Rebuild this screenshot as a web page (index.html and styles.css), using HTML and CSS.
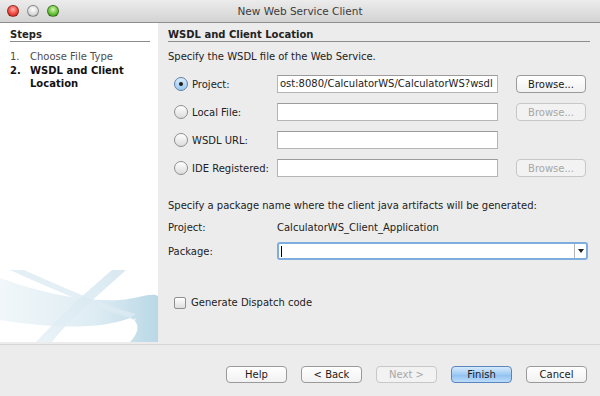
FILE: index.html
```html
<!DOCTYPE html>
<html lang="en">
<head>
    <meta charset="UTF-8">
    <title>New Web Service Client</title>
    <link rel="stylesheet" href="styles.css">
</head>
<body>
<div class="window">
    <!-- Barra de titulo -->
    <div class="titlebar">
        <div class="lights">
            <span class="light red"></span>
            <span class="light off"></span>
            <span class="light green"></span>
        </div>
        <div class="title">New Web Service Client</div>
    </div>

    <div class="main">
        <!-- Passos -->
        <div class="steps">
            <div class="section-head">Steps</div>
            <ol class="step-list">
                <li><span class="num">1.</span><span>Choose File Type</span></li>
                <li class="current"><span class="num">2.</span><span>WSDL and Client<br>Location</span></li>
            </ol>
            <svg class="swoosh" width="158" height="72" viewBox="0 0 158 72">
                <defs>
                    <linearGradient id="bandGrad" x1="0" y1="0" x2="1" y2="0">
                        <stop offset="0" stop-color="#f1f7fa"/>
                        <stop offset="0.6" stop-color="#deecf3"/>
                        <stop offset="1" stop-color="#b9d8e6"/>
                    </linearGradient>
                    <linearGradient id="stripeGrad" x1="0" y1="1" x2="1" y2="0">
                        <stop offset="0" stop-color="#e5f0f6"/>
                        <stop offset="1" stop-color="#d3e5ef"/>
                    </linearGradient>
                </defs>
                <path d="M0 8 C40 22 80 32 120 30 C140 28 152 22 158 26 L158 72 L130 72 C140 62 140 52 130 48 C100 60 50 58 0 50 Z" fill="url(#bandGrad)"/>
                <path d="M10 0 L24 0 C60 16 100 34 136 44 L130 48 C96 38 54 20 10 0 Z" fill="#ddebf3" opacity="0.8"/>
                <path d="M112 0 L126 0 C100 24 70 48 52 72 L36 72 C58 48 86 22 112 0 Z" fill="url(#stripeGrad)" opacity="0.85"/>
                <path d="M68 72 C90 66 118 58 136 48 L134 54 C114 64 92 70 80 72 Z" fill="#ffffff" opacity="0.7"/>
            </svg>
        </div>

        <!-- Painel principal -->
        <div class="panel">
            <div class="section-head">WSDL and Client Location</div>
            <p class="hint">Specify the WSDL file of the Web Service.</p>

            <div class="source-grid">
                <label class="radio-label"><span class="radio checked"></span>Project:</label>
                <div class="field">ost:8080/CalculatorWS/CalculatorWS?wsdl</div>
                <button class="btn">Browse...</button>

                <label class="radio-label"><span class="radio"></span>Local File:</label>
                <div class="field"></div>
                <button class="btn" disabled>Browse...</button>

                <label class="radio-label"><span class="radio"></span>WSDL URL:</label>
                <div class="field"></div>
                <span></span>

                <label class="radio-label"><span class="radio"></span>IDE Registered:</label>
                <div class="field"></div>
                <button class="btn" disabled>Browse...</button>
            </div>

            <p class="hint package-hint">Specify a package name where the client java artifacts will be generated:</p>

            <div class="package-grid">
                <span>Project:</span>
                <span>CalculatorWS_Client_Application</span>
                <span>Package:</span>
                <div class="combo">
                    <span class="caret"></span>
                    <span class="combo-arrow"></span>
                </div>
            </div>

            <label class="check-label"><span class="checkbox"></span>Generate Dispatch code</label>
        </div>
    </div>

    <!-- Botoes -->
    <div class="footer">
        <button class="btn wide">Help</button>
        <button class="btn wide">&lt; Back</button>
        <button class="btn wide" disabled>Next &gt;</button>
        <button class="btn wide default">Finish</button>
        <button class="btn wide">Cancel</button>
    </div>
</div>
</body>
</html>
```

FILE: styles.css
```css
* {
    box-sizing: border-box;
}
body {
    margin: 0;
    font-family: "DejaVu Sans", "Lucida Grande", sans-serif;
    font-size: 10px;
    line-height: 13px;
    color: #222;
}
.window {
    width: 600px;
    height: 396px;
    background: #ececec;
    display: flex;
    flex-direction: column;
    overflow: hidden;
}
.titlebar {
    height: 23px;
    flex: none;
    display: flex;
    align-items: center;
    position: relative;
    background: linear-gradient(#ececec, #d3d3d3);
    border-bottom: 1px solid #8e8e8e;
}
.lights {
    display: flex;
    gap: 8px;
    padding-left: 7px;
}
.light {
    width: 12px;
    height: 12px;
    border-radius: 50%;
    border: 1px solid rgba(0, 0, 0, 0.35);
}
.light.red {
    background: radial-gradient(circle at 50% 35%, #ffb3ae 0, #f0473d 55%, #b8231b 100%);
}
.light.off {
    background: radial-gradient(circle at 50% 35%, #ffffff 0, #dcdcdc 55%, #a9a9a9 100%);
}
.light.green {
    background: radial-gradient(circle at 50% 35%, #d6f5b2 0, #6ac33a 55%, #3a8a1a 100%);
}
.title {
    position: absolute;
    left: 0;
    right: 0;
    text-align: center;
    font-size: 10.5px;
    color: #3c3c3c;
    pointer-events: none;
}
.main {
    display: flex;
    height: 319px;
    flex: none;
}
.steps {
    width: 158px;
    flex: none;
    background: #fff;
    padding: 6px 0 0 10px;
    position: relative;
}
.swoosh {
    position: absolute;
    left: 0;
    bottom: 0;
}
.section-head {
    font-weight: bold;
    line-height: 12px;
    border-bottom: 1px solid #8c8c8c;
    margin-right: 8px;
}
.step-list {
    list-style: none;
    margin: 8px 0 0;
    padding: 0;
    color: #4e4e4e;
}
.step-list li {
    display: flex;
    margin-bottom: 1px;
}
.step-list .num {
    width: 20px;
    flex: none;
}
.step-list .current {
    font-weight: bold;
    color: #111;
}
.panel {
    flex: 1;
    padding: 6px 10px 0 10px;
}
.panel .section-head {
    margin-right: 0;
}
.hint {
    margin: 8px 0 0;
}
.source-grid {
    display: grid;
    grid-template-columns: 109px 221px 88px;
    row-gap: 10px;
    margin-top: 12px;
    align-items: center;
}
.source-grid .btn {
    margin-left: 18px;
}
.radio-label {
    display: flex;
    align-items: center;
    gap: 4px;
    padding-left: 6px;
}
.radio {
    width: 14px;
    height: 14px;
    border-radius: 50%;
    border: 1px solid #8f8f8f;
    background: linear-gradient(#ffffff, #dcdcdc);
    display: flex;
    align-items: center;
    justify-content: center;
}
.radio.checked {
    border-color: #5e7fa8;
    background: linear-gradient(#d9ebfb, #9cc7ef);
}
.radio.checked::after {
    content: "";
    width: 4px;
    height: 4px;
    border-radius: 50%;
    background: #1c1c1c;
}
.field {
    height: 18px;
    background: #fff;
    border: 1px solid #b5b5b5;
    border-top-color: #9c9c9c;
    padding: 1px 2px;
    white-space: nowrap;
    overflow: hidden;
}
.btn {
    font-family: inherit;
    font-size: 10px;
    color: #1a1a1a;
    height: 18px;
    padding: 0;
    border: 1px solid #9a9a9a;
    border-radius: 4px;
    background: linear-gradient(#ffffff, #f1f1f1);
}
.btn:disabled {
    color: #a7a7a7;
    border-color: #c7c7c7;
    background: #f2f2f2;
}
.package-hint {
    margin-top: 22px;
}
.package-grid {
    display: grid;
    grid-template-columns: 109px 311px;
    row-gap: 8px;
    margin-top: 9px;
    align-items: center;
}
.combo {
    height: 18px;
    border: 2px solid #7eaee0;
    border-radius: 3px;
    background: #fff;
    display: flex;
    align-items: center;
    justify-content: space-between;
}
.caret {
    width: 1px;
    height: 11px;
    margin-left: 2px;
    background: #000;
}
.combo-arrow {
    width: 12px;
    height: 100%;
    border-left: 1px solid #b5b5b5;
    display: flex;
    align-items: center;
    justify-content: center;
}
.combo-arrow::after {
    content: "";
    border-left: 3px solid transparent;
    border-right: 3px solid transparent;
    border-top: 4px solid #222;
}
.check-label {
    display: flex;
    align-items: center;
    gap: 5px;
    margin-top: 36px;
    padding-left: 6px;
}
.checkbox {
    width: 12px;
    height: 12px;
    border: 1px solid #8f8f8f;
    border-radius: 2px;
    background: linear-gradient(#ffffff, #dedede);
}
.footer {
    flex: 1;
    margin-top: 2px;
    border-top: 1px solid #d6d6d6;
    display: flex;
    justify-content: flex-end;
    align-items: flex-start;
    gap: 14px;
    padding: 21px 13px 0 0;
}
.btn.wide {
    width: 61px;
    height: 17px;
}
.btn.default {
    border-color: #5a86bd;
    background: linear-gradient(#d6eafc, #9fcaf3 50%, #8cbff1 51%, #bcdcfa);
}
```
